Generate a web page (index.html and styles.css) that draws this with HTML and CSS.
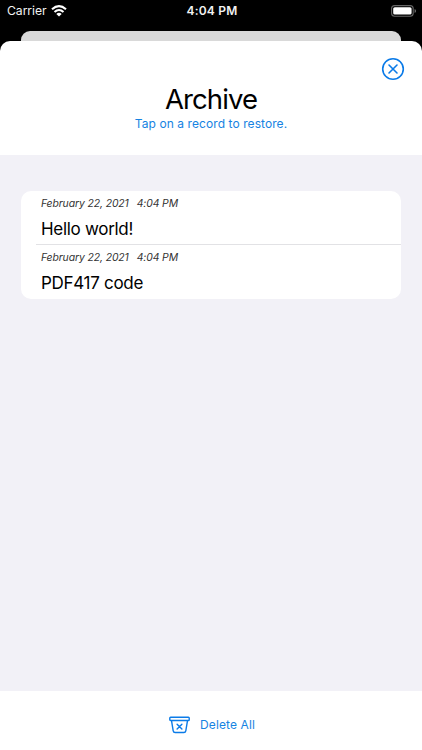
FILE: index.html
```html
<!DOCTYPE html>
<html lang="en">
<head>
<meta charset="utf-8">
<title>Archive</title>
<link rel="stylesheet" href="styles.css">
</head>
<body>
<div class="screen">
  <div class="status">
    <div class="carrier"><span class="carrier-name">Carrier</span>
      <svg class="wifi" width="16" height="12" viewBox="0 0 16 12" fill="none" stroke="#fff" stroke-width="2.1"><path d="M1 4.3Q8-1.9 15 4.3"/><path d="M3.5 7Q8 3 12.5 7"/><path d="M8 11.6L5.3 8.9Q8 6.7 10.7 8.9Z" fill="#fff" stroke="none"/></svg>
    </div>
    <time class="clock">4:04 PM</time>
    <svg class="battery" width="26" height="12" viewBox="0 0 26 12"><rect x=".6" y=".6" width="21.6" height="10.6" rx="3" fill="none" stroke="#666" stroke-width="1.1"/><rect x="2.2" y="2.2" width="18.4" height="7.4" rx="1.6" fill="#fff"/><path d="M23.6 4Q25 4.5 25 6T23.6 8Z" fill="#777"/></svg>
  </div>
  <div class="back-card"></div>
  <main class="sheet">
    <header class="header">
      <button class="close" aria-label="Close"><svg width="24" height="24" viewBox="0 0 24 24" fill="none" stroke="#0b7be8" stroke-width="1.6" stroke-linecap="round"><circle cx="12" cy="12" r="10.3"/><path d="M8 8L16 16M16 8L8 16"/></svg></button>
      <h1 class="title">Archive</h1>
      <p class="hint">Tap on a record to restore.</p>
    </header>
    <section class="content">
      <ul class="records">
        <li class="record"><p class="date"><span>February 22, 2021</span><span>4:04 PM</span></p><p class="name">Hello world!</p></li>
        <li class="record"><p class="date"><span>February 22, 2021</span><span>4:04 PM</span></p><p class="name">PDF417 code</p></li>
      </ul>
    </section>
    <footer class="footer">
      <svg width="21" height="18" viewBox="0 0 21 18" fill="none" stroke="#0b7be8" stroke-width="1.4" stroke-linecap="round" stroke-linejoin="round"><rect x=".8" y="1.3" width="19.4" height="3.2" rx=".8"/><path d="M2.5 4.6L4.2 14.9Q4.5 16.5 6.1 16.5H14.9Q16.5 16.5 16.8 14.9L18.5 4.6M8.1 8.2L12.9 13M12.9 8.2L8.1 13"/></svg>
      <span class="delete">Delete All</span>
    </footer>
  </main>
</div>
</body>
</html>
```
FILE: styles.css
```css
* { box-sizing: border-box; margin: 0; padding: 0; }
body { background: #000; font-family: Inter, "Liberation Sans", sans-serif; color: #000; }
.screen { width: 422px; height: 750px; display: flex; flex-direction: column; background: #000; overflow: hidden; }
.status { height: 31px; flex: none; display: grid; grid-template-columns: 1fr auto 1fr; align-items: start; color: #f2f2f2; padding: 3px 5px 0 7px; }
.carrier { display: flex; gap: 4px; line-height: 15px; font-size: 12.2px; }
.carrier-name { letter-spacing: -.05px; }
.wifi { margin-top: 2px; }
.clock { font-size: 12px; line-height: 15px; font-weight: 600; letter-spacing: .2px; }
.battery { justify-self: end; margin-top: 2px; }
.back-card { height: 10px; flex: none; margin: 0 21px; background: #d9d9d9; border-radius: 9px 9px 0 0; }
.sheet { flex: 1; display: flex; flex-direction: column; background: #fff; border-radius: 10px 10px 0 0; overflow: hidden; }
.header { height: 113.5px; flex: none; position: relative; text-align: center; padding-top: 41px; }
.close { position: absolute; right: 17px; top: 16px; width: 24px; height: 24px; border: 0; background: none; }
.close svg { display: block; }
.title { font-size: 27.5px; line-height: 34px; font-weight: 400; letter-spacing: -.9px; }
.hint { font-size: 12px; line-height: 15px; color: #1683e2; letter-spacing: .08px; }
.content { flex: 1; background: #f2f1f7; padding: 36px 21px 0; }
.records { list-style: none; background: #fff; border-radius: 10px; height: 108px; }
.record { height: 53px; padding: 6px 0 0 20px; }
.record + .record { height: 55px; padding-top: 7px; background: linear-gradient(#e2e2e5, #e2e2e5) 15px 0 / 100% 1px no-repeat; }
.date { display: flex; gap: 8px; font-size: 10.4px; line-height: 14px; font-style: italic; color: #333; letter-spacing: -.1px; }
.name { font-size: 17px; line-height: 22px; margin-top: 7px; letter-spacing: -.3px; }
.footer { height: 59px; flex: none; display: flex; justify-content: center; align-items: center; gap: 10px; padding: 8px 0 0 2px; background: #fff; }
.delete { font-size: 12px; line-height: 16px; color: #1683e2; letter-spacing: .1px; }
```
